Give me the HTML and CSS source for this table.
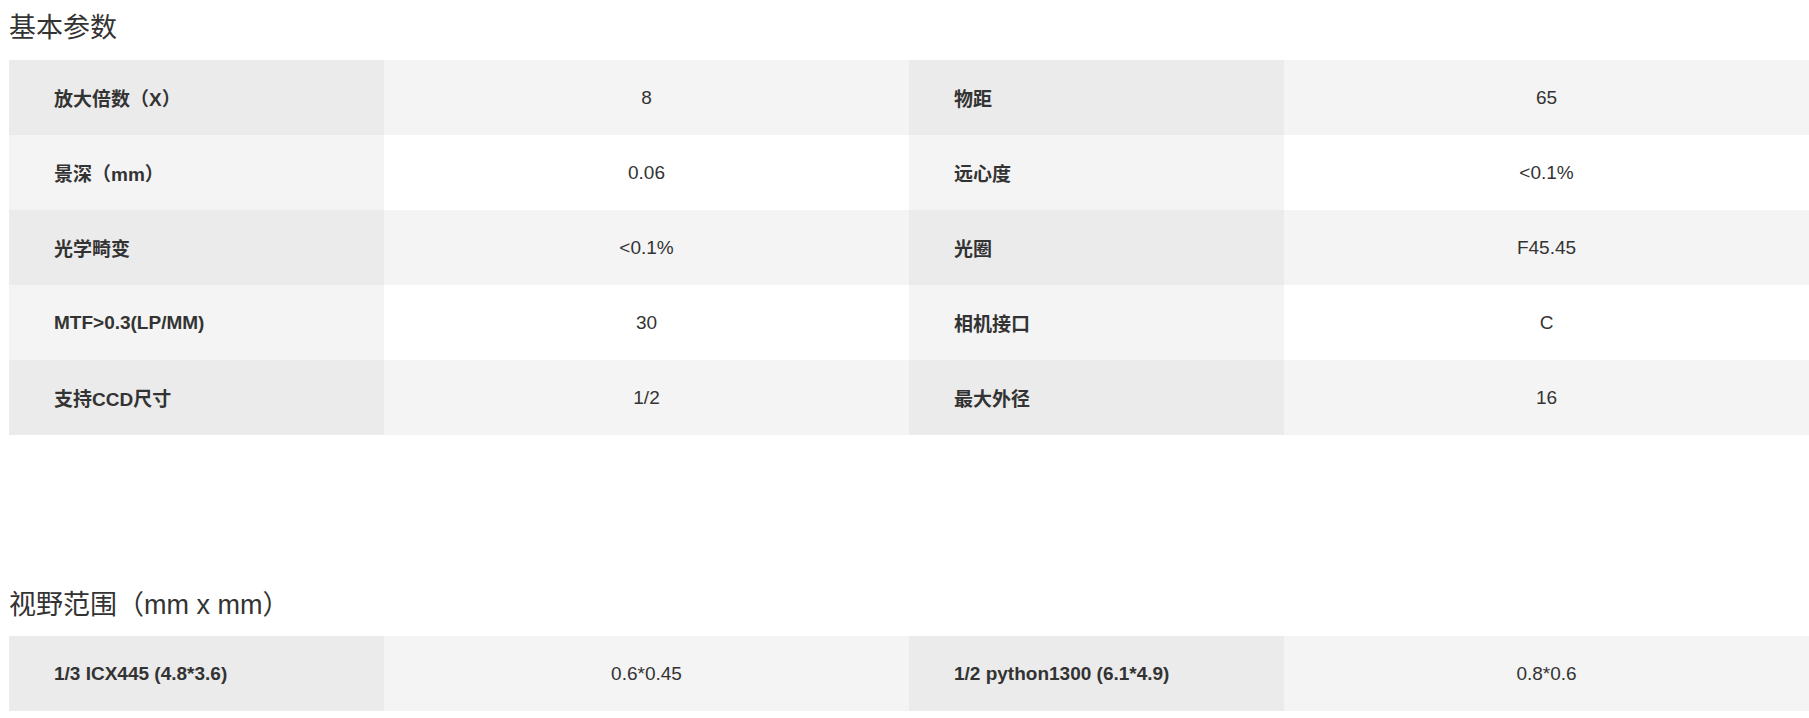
FILE: index.html
```html
<!DOCTYPE html>
<html lang="zh-CN">
<head>
<meta charset="utf-8">
<title>基本参数</title>
<link rel="stylesheet" href="styles.css">
</head>
<body>
<div class="page">
  <section class="section">
    <h2 class="section-title">基本参数</h2>
    <table class="spec">
      <colgroup><col class="c-label"><col class="c-value"><col class="c-label"><col class="c-value"></colgroup>
      <tbody>
        <tr><th>放大倍数（X）</th><td>8</td><th>物距</th><td>65</td></tr>
        <tr><th>景深（mm）</th><td>0.06</td><th>远心度</th><td>&lt;0.1%</td></tr>
        <tr><th>光学畸变</th><td>&lt;0.1%</td><th>光圈</th><td>F45.45</td></tr>
        <tr><th>MTF&gt;0.3(LP/MM)</th><td>30</td><th>相机接口</th><td>C</td></tr>
        <tr><th>支持CCD尺寸</th><td>1/2</td><th>最大外径</th><td>16</td></tr>
      </tbody>
    </table>
  </section>
  <section class="section section-fov">
    <h2 class="section-title">视野范围（mm x mm）</h2>
    <table class="spec">
      <colgroup><col class="c-label"><col class="c-value"><col class="c-label"><col class="c-value"></colgroup>
      <tbody>
        <tr><th>1/3 ICX445 (4.8*3.6)</th><td>0.6*0.45</td><th>1/2 python1300 (6.1*4.9)</th><td>0.8*0.6</td></tr>
      </tbody>
    </table>
  </section>
</div>
</body>
</html>
```
FILE: styles.css
```css
html, body {
  margin: 0;
  padding: 0;
  background: #ffffff;
}
body {
  font-family: "Liberation Sans", Arial, "Noto Sans CJK SC", sans-serif;
  color: #333333;
}
.page {
  padding: 8px 0 0 9px;
  width: 1800px;
}
.section-title {
  margin: 0 0 11px 0;
  height: 41px;
  line-height: 41px;
  font-size: 27px;
  font-weight: normal;
  color: #333333;
  font-family: "Liberation Sans", Arial, "Noto Sans CJK SC", sans-serif;
  white-space: nowrap;
}
.section-fov {
  margin-top: 150px;
}
.section-fov .section-title {
  margin-bottom: 10px;
}
.spec {
  width: 1800px;
  border-collapse: collapse;
  border-spacing: 0;
  table-layout: fixed;
}
.c-label { width: 375px; }
.c-value { width: 525px; }
.spec th,
.spec td {
  height: 75px;
  padding: 0;
  font-size: 19px;
  vertical-align: middle;
  white-space: nowrap;
}
.spec th {
  text-align: left;
  padding-left: 45px;
  font-weight: bold;
  color: #333333;
  background: #ebebeb;
}
.spec td {
  text-align: center;
  font-weight: normal;
  color: #333333;
  background: #f4f4f4;
}
.spec tr:nth-child(even) th {
  background: #f4f4f4;
}
.spec tr:nth-child(even) td {
  background: #ffffff;
}
```
